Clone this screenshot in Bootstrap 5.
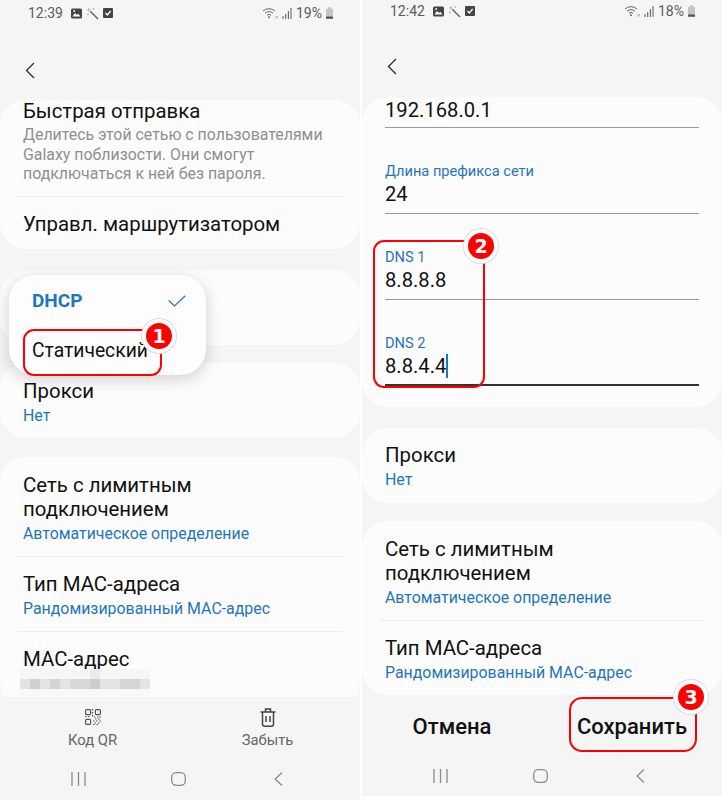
<!DOCTYPE html>
<html lang="en">
<head>
    <meta charset="UTF-8">
    <meta name="viewport" content="width=device-width, initial-scale=1.0">
    <title>Wi-Fi settings</title>
    <link href="https://cdn.jsdelivr.net/npm/bootstrap@5.3.0/dist/css/bootstrap.min.css" rel="stylesheet">
    <style>
        body { width: 722px; height: 800px; overflow: hidden; background: #fff; font-family: Roboto, "Liberation Sans", sans-serif; color: #111; }
        .screen { width: 360px; height: 800px; background: #f5f5f5; }
        .screen-r { height: 796px; margin-left: 2px; }
        .status, .head, .actions, .sysnav { flex-shrink: 0; }
        .status { height: 26px; padding: 0 27px 0 28px; font-size: 14px; color: #5c5c5c; }
        .screen-r .status { height: 22px; }
        .head { height: 74px; padding: 36px 0 0 25px; }
        .screen-r .head { height: 75px; }
        .scroller { min-height: 0; }
        .panel { background: #fcfcfc; border-radius: 26px; margin-bottom: 19px; }
        .panel-gap21 { margin-bottom: 21px; }
        .panel-gap18 { margin-bottom: 18px; }
        .panel-h75 { height: 75px; }
        .item { padding: 16px 23px 12px; }
        .item-first { padding-top: 0; padding-bottom: 12px; }
        .item-first .ttl { line-height: 22px; }
        .item + .item, .rule + .item { padding-top: 15px; }
        .item-tall { padding-bottom: 13px; }
        .item-up { padding-top: 15px; padding-bottom: 13px; }
        .rule { border-top: 1px solid #ececec; margin: 0 18px; }
        .ttl { font-size: 20.4px; line-height: 24px; }
        .sub { font-size: 15.9px; line-height: 20px; margin-top: 3px; color: #1f76bb; }
        .desc { font-size: 15.9px; line-height: 19.5px; margin-top: 3px; color: #8f8f8f; }
        .fields { padding: 0 23px 21px; }
        .fld { margin-top: 33px; padding-bottom: 6px; border-bottom: 1px solid #999; }
        .fld-first { margin-top: 0; padding-bottom: 4px; }
        .fld-on { padding-bottom: 5px; border-bottom: 2px solid #333; }
        .fld-lab { font-size: 14.6px; line-height: 20px; color: #1f76bb; }
        .fld-val { font-size: 20.2px; line-height: 26px; }
        .caret-bar { display: inline-block; width: 2px; height: 24px; background: #1f76bb; vertical-align: -5px; }
        .actions { height: 61px; padding: 12px 5px 0 5px; font-size: 14.8px; color: #666; }
        .actions .col-6 { line-height: 20px; }
        .qr-ic { margin-bottom: 5px; }
        .trash-ic { margin-top: -1px; margin-bottom: 3px; }
        .screen-r .actions { height: 58px; padding: 0; }
        .save-btn { font-size: 22px; font-weight: 500; color: #111; border: 0; padding: 0; }
        .sysnav { height: 42px; padding-left: 28px; }
        .screen-r .sysnav { height: 41px; }
        .sysnav > div { width: 100px; }
        .popup { left: 9px; top: 275px; width: 197px; height: 100px; background: #fdfdfd; border-radius: 26px; box-shadow: 0 4px 16px rgba(0,0,0,.18); padding: 14px 20px 0 23px; font-size: 19.3px; }
        .popup-on { color: #1f76bb; font-weight: 700; font-size: 19px; height: 24px; line-height: 24px; }
        .popup-off { margin-top: 26px; line-height: 24px; }
        .marks-r { left: 362px; top: 0; }
        .mark-box { border: 2px solid #f00; border-radius: 11px; }
        .mark-box1 { left: 23px; top: 329px; width: 139px; height: 47px; }
        .mark-box2 { left: 11px; top: 240px; width: 112px; height: 148px; }
        .mark-box3 { left: 207px; top: 697px; width: 128px; height: 55px; border-radius: 13px; }
        .mark-num { width: 34px; height: 34px; border-radius: 50%; background: #f00; border: 4px solid #fff; box-shadow: 0 0 0 1px #ddd; color: #fff; font-family: "DejaVu Sans", sans-serif; font-weight: 700; font-size: 19px; }
        .mark-num1 { left: 142px; top: 319px; }
        .mark-num2 { left: 102px; top: 229px; }
        .mark-num3 { left: 312px; top: 680px; }
        .mac-blur { display: block; margin: -2px 0 0 -3px; }
    </style>
</head>
<body>
<svg width="0" height="0" class="position-absolute">
    <symbol id="ic-pic" viewBox="0 0 11 11"><rect width="11" height="10" y=".5" rx="1.5" fill="#444"/><path d="M1.5 8.5 4 5l2 2 1.2-1.2L9.5 8.5z" fill="#fff"/><circle cx="3.2" cy="3" r=".9" fill="#fff"/></symbol>
    <symbol id="ic-wand" viewBox="0 0 14 14"><path d="M4.5 4.5 13 13" stroke="#666" stroke-width="1.6" fill="none"/><path d="M3 1v4M1 3h4M8 1v2M7 2h2M1 8h2M2 7v2" stroke="#aaa" stroke-width=".8" fill="none"/></symbol>
    <symbol id="ic-chk" viewBox="0 0 10 10"><rect width="10" height="10" rx="1" fill="#444"/><path d="M2.5 5 4.4 7 7.6 3" stroke="#fff" stroke-width="1.3" fill="none"/></symbol>
    <symbol id="ic-wifi" viewBox="0 0 16 12"><g fill="none" stroke="#666" stroke-width="1"><path d="M1 4a9 9 0 0 1 12 0"/><path d="M3 6.200a6 6 0 0 1 8 0"/><path d="M5 8.300a3 3 0 0 1 4 0"/></g><circle cx="7" cy="10.300" r="1" fill="#666"/><path d="M14 9v2.500M15.200 9v2.500" stroke="#999" stroke-width=".8"/></symbol>
    <symbol id="ic-sig" viewBox="0 0 10 11"><path d="M1 8v3M3.700 6v5M6.400 3v8M9 0v11" stroke="#666" stroke-width="1.100"/></symbol>
    <symbol id="ic-bat" viewBox="0 0 8 13"><rect x="2.500" width="3" height="2" fill="#bbb"/><rect y="1.500" width="8" height="11.500" rx="1" fill="#c4c4c4"/><rect y="10.500" width="8" height="2.500" rx=".6" fill="#555"/></symbol>
    <symbol id="ic-back" viewBox="0 0 10 17"><path d="M9 1 1.500 8.500 9 16" fill="none" stroke="#333" stroke-width="1.400"/></symbol>
    <symbol id="nav-recent" viewBox="0 0 15 14"><path d="M1 0v14M7.500 0v14M14 0v14" stroke="#8c8c8c" stroke-width="1.300"/></symbol>
    <symbol id="nav-home" viewBox="0 0 15 14"><rect x=".7" y=".7" width="13.600" height="12.600" rx="4.500" fill="none" stroke="#8c8c8c" stroke-width="1.300"/></symbol>
    <symbol id="nav-back" viewBox="0 0 9 14"><path d="M8 .5 1.200 7 8 13.500" fill="none" stroke="#8c8c8c" stroke-width="1.300"/></symbol>
</svg>

<div class="d-flex align-items-start">
    <!-- left phone -->
    <div class="screen d-flex flex-column">
        <div class="status d-flex align-items-center justify-content-between">
            <div class="d-flex align-items-center">
                <span>12:39</span>
                <svg class="ms-2" width="11" height="11"><use href="#ic-pic"/></svg>
                <svg class="ms-1" width="13" height="13"><use href="#ic-wand"/></svg>
                <svg class="ms-1" width="10" height="10"><use href="#ic-chk"/></svg>
            </div>
            <div class="d-flex align-items-center">
                <svg width="16" height="12"><use href="#ic-wifi"/></svg>
                <svg class="ms-1" width="10" height="11"><use href="#ic-sig"/></svg>
                <span class="ms-1">19%</span>
                <svg class="ms-1" width="7" height="12"><use href="#ic-bat"/></svg>
            </div>
        </div>
        <div class="head"><svg class="d-block" width="10" height="17"><use href="#ic-back"/></svg></div>
        <div class="scroller flex-grow-1 overflow-hidden">
            <div class="panel panel-gap21">
                <div class="item item-first">
                    <div class="ttl">Быстрая отправка</div>
                    <div class="desc">Делитесь этой сетью с пользователями Galaxy поблизости. Они смогут подключаться к ней без пароля.</div>
                </div>
                <div class="rule"></div>
                <div class="item item-tall">
                    <div class="ttl">Управл. маршрутизатором</div>
                </div>
            </div>
            <div class="panel panel-h75 panel-gap18"></div>
            <div class="panel">
                <div class="item">
                    <div class="ttl">Прокси</div>
                    <div class="sub">Нет</div>
                </div>
            </div>
            <div class="panel">
                <div class="item">
                    <div class="ttl">Сеть с лимитным подключением</div>
                    <div class="sub">Автоматическое определение</div>
                </div>
                <div class="rule"></div>
                <div class="item">
                    <div class="ttl">Тип MAC-адреса</div>
                    <div class="sub">Рандомизированный MAC-адрес</div>
                </div>
                <div class="rule"></div>
                <div class="item">
                    <div class="ttl">MAC-адрес</div>
                    <svg class="mac-blur" width="130" height="27" viewBox="0 0 130 27">
                        <rect width="130" height="10" fill="#f6f6f6"/>
                        <rect x="70" width="10" height="10" fill="#ebebeb"/>
                        <rect y="10" width="130" height="10" fill="#e4e4e4"/>
                        <rect x="10" y="10" width="10" height="10" fill="#cfcfcf"/>
                        <rect x="30" y="10" width="10" height="10" fill="#d4d4d4"/>
                        <rect x="50" y="10" width="20" height="10" fill="#d8d8d8"/>
                        <rect x="70" y="10" width="10" height="10" fill="#cdcdcd"/>
                        <rect x="100" y="10" width="20" height="10" fill="#d5d5d5"/>
                        <rect y="20" width="130" height="7" fill="#f8f8f8"/>
                    </svg>
                </div>
            </div>
        </div>
        <div class="actions row g-0 text-center">
            <div class="col-6">
                <svg class="qr-ic d-block mx-auto" width="16" height="16" viewBox="0 0 16 16" fill="none" stroke="#555" stroke-width="1.200">
                    <rect x=".6" y=".6" width="5" height="5" rx="1"/><rect x="10.400" y=".6" width="5" height="5" rx="1"/><rect x=".6" y="10.400" width="5" height="5" rx="1"/>
                    <path d="M7.500 0v1.500M7.500 3v1.500M7.500 6v1.500M0 7.500h1.500M3 7.500h1.500M9 8h1.500M12 8h1.500M14.500 8h1.500M10 10h1.500M13 10h1.500M8 12h1.500M11 12h1.500M14.500 12h1.500M9.500 14h1.500M13 14h1.500M8 15.500h1.500M11.500 15.500h1.500"/>
                </svg>
                <div>Код QR</div>
            </div>
            <div class="col-6">
                <svg class="trash-ic d-block mx-auto" width="16" height="19" viewBox="0 0 16 19" fill="none" stroke="#444" stroke-width="1.500">
                    <path d="M.5 4h15M5.500 3.500V1h5v2.500"/><path d="M2.500 4v12a2.200 2.200 0 0 0 2.200 2.200h6.600a2.200 2.200 0 0 0 2.200-2.200V4"/><path d="M6 8v6M10 8v6"/>
                </svg>
                <div>Забыть</div>
            </div>
        </div>
        <div class="sysnav d-flex align-items-center text-center">
            <div><svg class="d-block mx-auto" width="15" height="14"><use href="#nav-recent"/></svg></div>
            <div><svg class="d-block mx-auto" width="15" height="14"><use href="#nav-home"/></svg></div>
            <div><svg class="d-block mx-auto" width="9" height="14"><use href="#nav-back"/></svg></div>
        </div>
    </div>

    <!-- right phone -->
    <div class="screen screen-r d-flex flex-column">
        <div class="status d-flex align-items-center justify-content-between">
            <div class="d-flex align-items-center">
                <span>12:42</span>
                <svg class="ms-2" width="11" height="11"><use href="#ic-pic"/></svg>
                <svg class="ms-1" width="13" height="13"><use href="#ic-wand"/></svg>
                <svg class="ms-1" width="10" height="10"><use href="#ic-chk"/></svg>
            </div>
            <div class="d-flex align-items-center">
                <svg width="16" height="12"><use href="#ic-wifi"/></svg>
                <svg class="ms-1" width="10" height="11"><use href="#ic-sig"/></svg>
                <span class="ms-1">18%</span>
                <svg class="ms-1" width="7" height="12"><use href="#ic-bat"/></svg>
            </div>
        </div>
        <div class="head"><svg class="d-block" width="10" height="17"><use href="#ic-back"/></svg></div>
        <div class="scroller flex-grow-1 overflow-hidden">
            <div class="panel panel-gap21">
                <div class="fields">
                    <div class="fld fld-first"><div class="fld-val">192.168.0.1</div></div>
                    <div class="fld"><div class="fld-lab">Длина префикса сети</div><div class="fld-val">24</div></div>
                    <div class="fld"><div class="fld-lab">DNS 1</div><div class="fld-val">8.8.8.8</div></div>
                    <div class="fld fld-on"><div class="fld-lab">DNS 2</div><div class="fld-val">8.8.4.4<span class="caret-bar"></span></div></div>
                </div>
            </div>
            <div class="panel panel-gap18">
                <div class="item item-up">
                    <div class="ttl">Прокси</div>
                    <div class="sub">Нет</div>
                </div>
            </div>
            <div class="panel">
                <div class="item">
                    <div class="ttl">Сеть с лимитным подключением</div>
                    <div class="sub">Автоматическое определение</div>
                </div>
                <div class="rule"></div>
                <div class="item">
                    <div class="ttl">Тип MAC-адреса</div>
                    <div class="sub">Рандомизированный MAC-адрес</div>
                </div>
            </div>
        </div>
        <div class="actions row g-0 text-center align-items-center">
            <div class="col-6"><button class="btn save-btn" type="button">Отмена</button></div>
            <div class="col-6"><button class="btn save-btn" type="button">Сохранить</button></div>
        </div>
        <div class="sysnav d-flex align-items-center text-center">
            <div><svg class="d-block mx-auto" width="15" height="14"><use href="#nav-recent"/></svg></div>
            <div><svg class="d-block mx-auto" width="15" height="14"><use href="#nav-home"/></svg></div>
            <div><svg class="d-block mx-auto" width="9" height="14"><use href="#nav-back"/></svg></div>
        </div>
    </div>
</div>

<!-- popup menu and red call-outs lie over the screens -->
<div class="popup position-absolute">
    <div class="popup-on d-flex justify-content-between align-items-center">
        <span>DHCP</span>
        <svg width="18" height="12" viewBox="0 0 18 12"><path d="M.7 5.500 6.500 11 17.300 .7" fill="none" stroke="#1f76bb" stroke-width="1.200"/></svg>
    </div>
    <div class="popup-off">Статический</div>
</div>
<div class="mark-box mark-box1 position-absolute"></div>
<div class="mark-num mark-num1 position-absolute d-flex align-items-center justify-content-center">1</div>
<div class="marks-r position-absolute">
    <div class="mark-box mark-box2 position-absolute"></div>
    <div class="mark-num mark-num2 position-absolute d-flex align-items-center justify-content-center">2</div>
    <div class="mark-box mark-box3 position-absolute"></div>
    <div class="mark-num mark-num3 position-absolute d-flex align-items-center justify-content-center">3</div>
</div>

<script src="https://cdn.jsdelivr.net/npm/bootstrap@5.3.0/dist/js/bootstrap.bundle.min.js"></script>
</body>
</html>
